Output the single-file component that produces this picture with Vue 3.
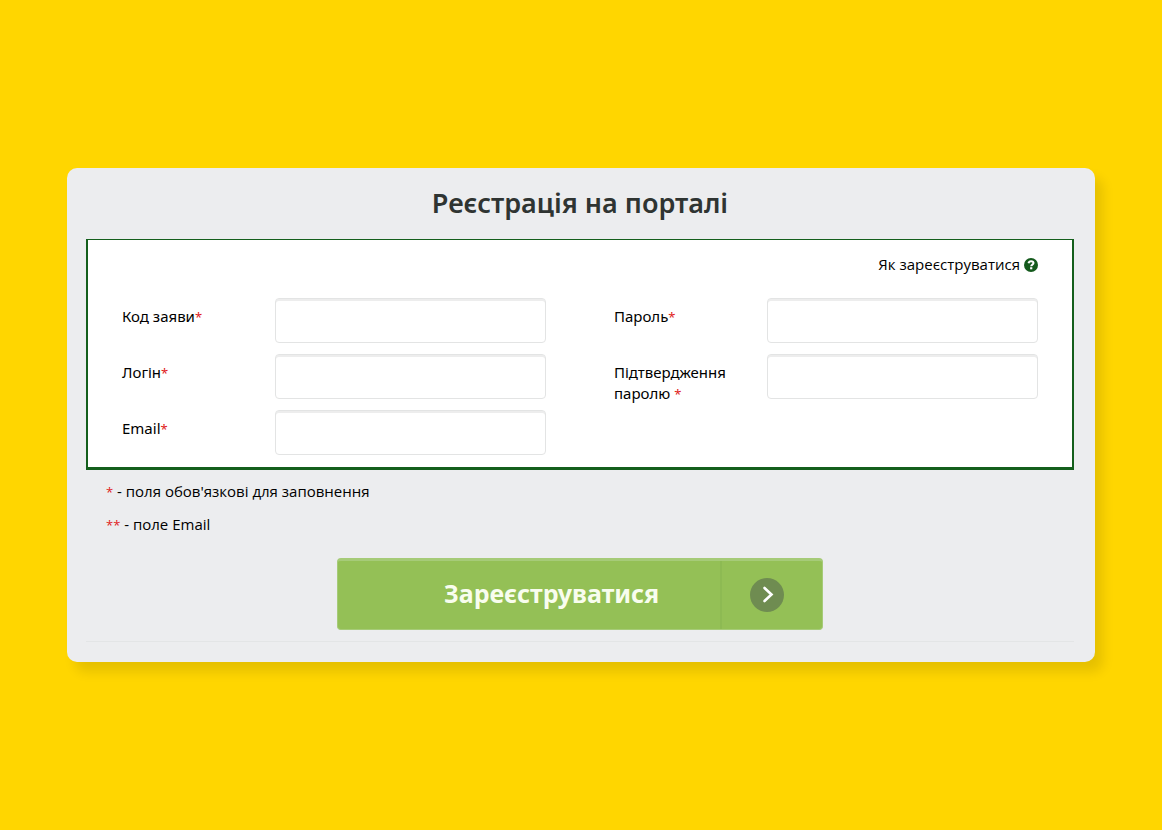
<script setup>
import { reactive } from 'vue'

const columns = [
  [
    { id: 'code', label: 'Код заяви', type: 'text' },
    { id: 'login', label: 'Логін', type: 'text' },
    { id: 'email', label: 'Email', type: 'email' },
  ],
  [
    { id: 'password', label: 'Пароль', type: 'password' },
    { id: 'confirm', label: 'Підтвердження паролю ', type: 'password' },
  ],
]
const form = reactive({ code: '', login: '', email: '', password: '', confirm: '' })
</script>

<template>
  <main class="page">
    <form class="card" @submit.prevent>
      <h1 class="title">Реєстрація на порталі</h1>
      <section class="panel">
        <a class="help" href="#">
          <span>Як зареєструватися</span>
          <svg class="help-icon" viewBox="0 0 14 14" aria-hidden="true">
            <circle cx="7" cy="7" r="7" fill="#145a1c" />
            <path d="M4.5 5.3C4.8 3.8 5.7 3.2 7.1 3.2C8.6 3.2 9.5 4 9.5 5.1C9.5 6.7 7.2 6.6 7.2 8.3" fill="none" stroke="#fff" stroke-width="2" />
            <rect x="6.1" y="9.2" width="2.2" height="2.1" fill="#fff" />
          </svg>
        </a>
        <div class="columns">
          <div v-for="(column, index) in columns" :key="index" class="column">
            <div v-for="field in column" :key="field.id" class="field">
              <label class="label" :for="field.id">{{ field.label }}<span class="star">*</span></label>
              <input :id="field.id" v-model="form[field.id]" class="input" :type="field.type" />
            </div>
          </div>
        </div>
      </section>
      <div class="notes">
        <p class="note"><span class="star">*</span> - поля обов'язкові для заповнення</p>
        <p class="note"><span class="star">**</span> - поле Email</p>
      </div>
      <button class="submit" type="submit">
        <span class="submit-text">Зареєструватися</span>
        <span class="submit-side">
          <svg class="arrow" viewBox="0 0 34 34" aria-hidden="true">
            <circle cx="17" cy="17" r="17" fill="#6f8c51" />
            <path d="M14.5 10L21.5 16.5L14.5 23" fill="none" stroke="#fff" stroke-width="2.6" stroke-linecap="round" />
          </svg>
        </span>
      </button>
      <hr class="rule" />
    </form>
  </main>
</template>

<style>
body {
  margin: 0;
  background: #ffd600;
}
</style>

<style scoped>
.page {
  box-sizing: border-box;
  min-height: 100vh;
  display: flex;
  align-items: center;
  padding: 24px 67px;
  background: #ffd600;
  font-family: "Open Sans", "Noto Sans", sans-serif;
  font-size: 15px;
  line-height: 21px;
  color: #000;
}
.card {
  box-sizing: border-box;
  width: 100%;
  padding: 15px 21px 20px 19px;
  border-radius: 10px;
  background: #ecedef;
  box-shadow: 8px 10px 12px rgba(0, 0, 0, 0.1);
}
.title {
  margin: 0 0 16px;
  font-family: "Noto Sans", sans-serif;
  font-size: 27px;
  line-height: 40px;
  font-weight: 600;
  text-align: center;
  color: #2f3432;
}
.panel {
  padding: 14px 34px 12px;
  border: 2px solid #145f1c;
  border-top-width: 1px;
  border-bottom-width: 3px;
  background: #fff;
}
.help {
  display: flex;
  align-items: center;
  justify-content: flex-end;
  gap: 4px;
  margin-bottom: 23px;
  color: #000;
  text-decoration: none;
}
.help-icon {
  width: 14px;
  height: 14px;
}
.columns {
  display: grid;
  grid-template-columns: 1fr 1fr;
  gap: 68px;
}
.column {
  display: grid;
  align-content: start;
  gap: 11px;
}
.field {
  display: grid;
  grid-template-columns: 36% 64%;
  height: 45px;
}
.label {
  padding: 8px 24px 0 0;
  font-family: "Noto Sans", sans-serif;
}
.star {
  color: #e02020;
  font-size: 13px;
  line-height: 16px;
}
.input {
  box-sizing: border-box;
  width: 100%;
  height: 45px;
  padding: 6px 12px;
  border: 1px solid #e3e4e4;
  border-radius: 4px;
  background: #fff;
  box-shadow: inset 0 2px 0 #ededed;
  font: inherit;
}
.notes {
  padding: 11px 20px 0;
}
.note {
  margin: 0 0 12px;
}
.submit {
  box-sizing: border-box;
  display: flex;
  width: 486px;
  max-width: 100%;
  height: 72px;
  margin: 23px auto 11px;
  padding: 0;
  border: 1px solid #a6cb78;
  border-top-width: 3px;
  border-radius: 4px;
  background: #94c056;
  color: #f8fdee;
  font-family: "Noto Sans", sans-serif;
  font-size: 25px;
  font-weight: 700;
}
.submit-text {
  flex: 1;
  align-self: center;
  padding: 0 0 4px 45px;
}
.submit-side {
  box-sizing: border-box;
  display: flex;
  align-items: center;
  width: 102px;
  height: 100%;
  padding-left: 28px;
  border-left: 2px solid #8dba53;
}
.arrow {
  width: 34px;
  height: 34px;
}
.rule {
  height: 1px;
  margin: 0;
  border: 0;
  background: #e3e5e6;
}
</style>
